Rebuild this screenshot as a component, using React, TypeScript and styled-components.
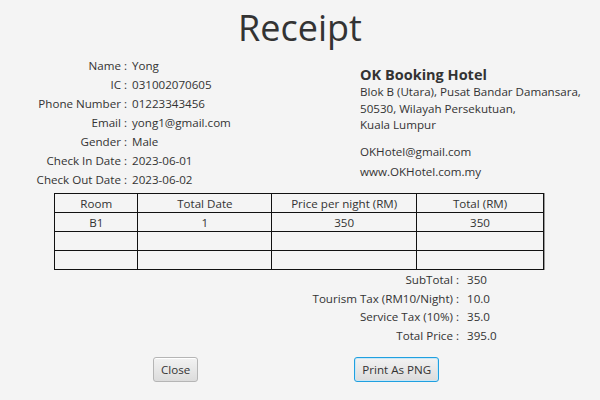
import { Fragment } from "react";
import styled, { createGlobalStyle } from "styled-components";

const GlobalStyle = createGlobalStyle`
  html, body {
    margin: 0;
    padding: 0;
    background: #f4f4f4;
  }
  body {
    font-family: "Open Sans", "Noto Sans", sans-serif;
    color: #333;
  }
`;

const Page = styled.div`
  width: 600px;
  height: 400px;
  background: #f4f4f4;
  overflow: hidden;
  font-size: 11.6px;
`;

const Title = styled.h1`
  margin: 0;
  height: 56px;
  text-align: center;
  font-size: 36px;
  font-weight: 400;
  line-height: 56px;
  color: #333;
`;

const Top = styled.div`
  display: flex;
  height: 137px;
`;

const InfoGrid = styled.div`
  display: grid;
  grid-template-columns: 127px auto;
  grid-auto-rows: 19px;
  column-gap: 5px;
  align-items: center;
  width: 360px;
  align-content: start;
`;

const Label = styled.div`
  text-align: right;
  white-space: nowrap;
`;

const Value = styled.div`
  white-space: nowrap;
`;

const Hotel = styled.div`
  padding-top: 9px;
  display: flex;
  flex-direction: column;
`;

const HotelName = styled.div`
  font-size: 14.5px;
  font-weight: 700;
  line-height: 19px;
`;

const Address = styled.div`
  line-height: 16.5px;
  margin-bottom: 8px;
`;

const Contact = styled.div`
  line-height: 20px;
`;

const Table = styled.table`
  margin-left: 54px;
  width: 490px;
  border-collapse: collapse;
  box-shadow: 1px 0 0 #999;
`;

const Cell = styled.td<{ $w?: number }>`
  border: 1px solid #111;
  height: 18px;
  padding: 0;
  text-align: center;
  font-size: 11.6px;
  line-height: 17px;
  width: ${(p) => (p.$w ? `${p.$w}px` : "auto")};
`;

const Summary = styled.div`
  display: grid;
  grid-template-columns: 459px auto;
  grid-auto-rows: 18.7px;
  column-gap: 8px;
  align-items: center;
`;

const Buttons = styled.div`
  display: flex;
  margin-top: 12px;
  padding-left: 153px;
  gap: 156px;
`;

const Button = styled.button<{ $focused?: boolean }>`
  height: 25px;
  padding: 0 7px;
  font-family: inherit;
  font-size: 11.6px;
  color: #333;
  border-radius: 3px;
  border: 1px solid ${(p) => (p.$focused ? "#1fa0e0" : "#b5b5b5")};
  box-shadow: ${(p) => (p.$focused ? "inset 0 0 0 1px #c9e6f5" : "inset 0 1px 0 #fff")};
  background: linear-gradient(#f2f2f2, #dcdcdc);
`;

const customer: [string, string][] = [
  ["Name :", "Yong"],
  ["IC :", "031002070605"],
  ["Phone Number :", "01223343456"],
  ["Email :", "yong1@gmail.com"],
  ["Gender :", "Male"],
  ["Check In Date :", "2023-06-01"],
  ["Check Out Date :", "2023-06-02"],
];

const totals: [string, string][] = [
  ["SubTotal :", "350"],
  ["Tourism Tax (RM10/Night) :", "10.0"],
  ["Service Tax (10%) :", "35.0"],
  ["Total Price :", "395.0"],
];

const widths = [83, 134, 145, 127];
const rows = [["B1", "1", "350", "350"], ["", "", "", ""], ["", "", "", ""]];

export default function App() {
  return (
    <Page>
      <GlobalStyle />
      <Title>Receipt</Title>
      <Top>
        <InfoGrid>
          {customer.map(([l, v]) => (
            <Fragment key={l}>
              <Label>{l}</Label>
              <Value>{v}</Value>
            </Fragment>
          ))}
        </InfoGrid>
        <Hotel>
          <HotelName>OK Booking Hotel</HotelName>
          <Address>
            Blok B (Utara), Pusat Bandar Damansara,
            <br />
            50530, Wilayah Persekutuan,
            <br />
            Kuala Lumpur
          </Address>
          <Contact>OKHotel@gmail.com</Contact>
          <Contact>www.OKHotel.com.my</Contact>
        </Hotel>
      </Top>
      <Table>
        <tbody>
          <tr>
            <Cell $w={widths[0]}>Room</Cell>
            <Cell $w={widths[1]}>Total Date</Cell>
            <Cell $w={widths[2]}>Price per night (RM)</Cell>
            <Cell $w={widths[3]}>Total (RM)</Cell>
          </tr>
          {rows.map((r, i) => (
            <tr key={i}>
              {r.map((c, j) => (
                <Cell key={j}>{c}</Cell>
              ))}
            </tr>
          ))}
        </tbody>
      </Table>
      <Summary>
        {totals.map(([l, v]) => (
          <Fragment key={l}>
            <Label>{l}</Label>
            <Value>{v}</Value>
          </Fragment>
        ))}
      </Summary>
      <Buttons>
        <Button>Close</Button>
        <Button $focused>Print As PNG</Button>
      </Buttons>
    </Page>
  );
}
